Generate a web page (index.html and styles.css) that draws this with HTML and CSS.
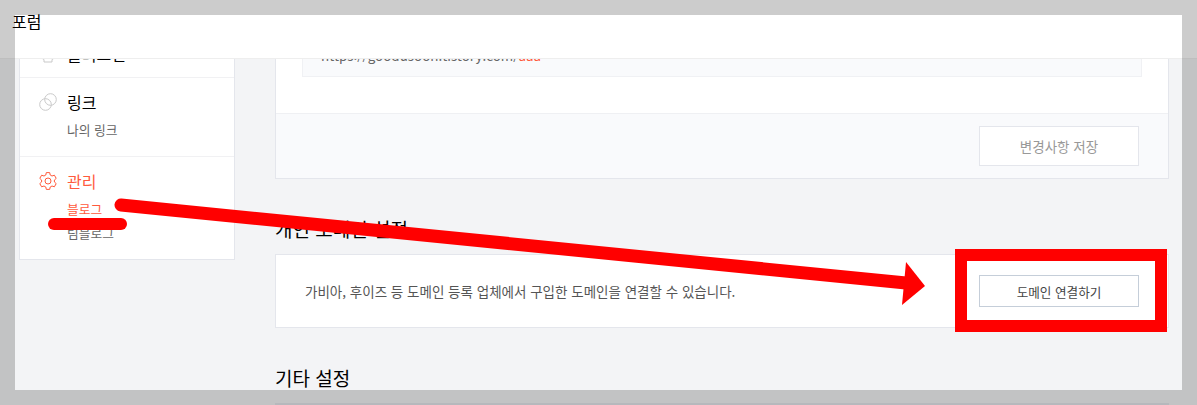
FILE: index.html
```html
<!DOCTYPE html>
<html lang="ko">
<head>
    <meta charset="UTF-8">
    <title>포럼</title>
    <link rel="stylesheet" href="styles.css">
</head>
<body>
    <div class="header"></div>

    <div class="layout">
        <div class="sidebar">
            <div class="nav-item nav-first">
                <svg class="nav-icon" viewBox="0 0 18 18"><path d="M2.5 13 L5 14.5 V17 H13 V14.5 L15.5 13" /></svg>
                <div class="nav-label">플러그인</div>
            </div>
            <div class="nav-item">
                <svg class="nav-icon" viewBox="0 0 18 18">
                    <ellipse cx="6.5" cy="11.5" rx="5.8" ry="5.8" />
                    <ellipse cx="11.5" cy="6.5" rx="5.8" ry="5.8" />
                </svg>
                <div class="nav-label">링크</div>
                <div class="nav-sub">
                    <a>나의 링크</a>
                </div>
            </div>
            <div class="nav-item nav-last active">
                <svg class="nav-icon" viewBox="0 0 18 18">
                    <path d="M7.3 0.6 H10.7 L11.2 3 L13 4 L15.4 3.2 L17.2 6.4 L15.4 8 V10 L17.2 11.6 L15.4 14.8 L13 14 L11.2 15 L10.7 17.4 H7.3 L6.8 15 L5 14 L2.6 14.8 L0.8 11.6 L2.6 10 V8 L0.8 6.4 L2.6 3.2 L5 4 L6.8 3 Z" />
                    <circle cx="9" cy="9" r="3" />
                </svg>
                <div class="nav-label">관리</div>
                <div class="nav-sub">
                    <a class="current">블로그</a>
                    <a>팀블로그</a>
                </div>
            </div>
        </div>

        <div class="main">
            <div class="card">
                <div class="card-body">
                    <div class="url-box">https://goodusoon.tistory.com/<span class="url-red">aaa</span></div>
                </div>
                <div class="card-footer">
                    <button class="btn btn-disabled">변경사항 저장</button>
                </div>
            </div>

            <h2 class="section-title">개인 도메인 설정</h2>
            <div class="card domain-row">
                <p>가비아, 후이즈 등 도메인 등록 업체에서 구입한 도메인을 연결할 수 있습니다.</p>
                <button class="btn btn-connect">도메인 연결하기</button>
            </div>

            <h2 class="section-title">기타 설정</h2>
            <div class="card"></div>
        </div>
    </div>

    <div class="dim-frame"></div>
    <div class="forum-title">포럼</div>

    <svg class="marks" viewBox="0 0 1197 405">
        <line x1="121" y1="205" x2="906" y2="283" stroke="#ff0000" stroke-width="13" stroke-linecap="round" />
        <polygon points="906,262 925,286 902,305" fill="#ff0000" />
        <line x1="54" y1="224" x2="121" y2="224" stroke="#ff0000" stroke-width="12" stroke-linecap="round" />
        <rect x="961" y="255" width="200" height="71" fill="none" stroke="#ff0000" stroke-width="12" />
    </svg>
</body>
</html>
```

FILE: styles.css
```css
* { box-sizing: border-box; }
html, body { margin: 0; padding: 0; height: 405px; overflow: hidden; }
body { position: relative; background: #f3f4f6; font-family: "Noto Sans CJK KR", "Noto Sans", sans-serif; color: #333; }

.header { position: absolute; top: 0; left: 0; right: 0; height: 59px; background: #fff; border-bottom: 1px solid #eeeeee; z-index: 2; }
.dim-frame { position: absolute; top: 0; left: 0; width: 1197px; height: 405px; border: 15px solid rgba(0, 0, 0, 0.2); z-index: 3; }
.forum-title { position: absolute; top: 11px; left: 12px; font-size: 16px; line-height: 20px; color: #000; z-index: 4; }
.marks { position: absolute; top: 0; left: 0; width: 1197px; height: 405px; z-index: 5; }

.layout { display: flex; align-items: flex-start; gap: 40px; padding-left: 19px; }

.sidebar { width: 216px; background: #fff; border: 1px solid #e4e6ec; border-top: none; }
.nav-item { position: relative; padding: 15px 0 14px 47px; border-bottom: 1px solid #f1f1f3; }
.nav-first { padding-top: 45px; padding-bottom: 14px; }
.nav-last { border-bottom: none; }
.nav-icon { position: absolute; left: 19px; width: 18px; height: 18px; fill: none; stroke: #c9c9c9; stroke-width: 1; }
.nav-label { font-size: 16px; line-height: 18px; color: #000; }
.nav-sub { margin-top: 7px; }
.nav-sub a { display: block; font-size: 12.75px; line-height: 24px; color: #666; }
.active .nav-icon { stroke: #ff5a3c; }
.active .nav-label, .nav-sub a.current { color: #ff5a3c; }

.main { width: 894px; }
.card { background: #fff; border: 1px solid #e4e6ec; }
.card-body { height: 113px; padding: 0 26px; border-bottom: 1px solid #eff0f3; }
.url-box { height: 76px; padding: 44px 18px 0; font-size: 13.4px; line-height: 20px; color: #666; background: #f9fafc; border: 1px solid #f0f1f4; border-top: none; }
.url-red { color: #ff5a3c; }
.card-footer { display: flex; justify-content: flex-end; padding: 12px 29px 12px 0; background: #f9fafc; }

.btn { width: 160px; background: #fff; font-family: inherit; padding: 0; border: 1px solid #e4e6ec; }
.btn-disabled { height: 40px; font-size: 13.5px; color: #999; }
.btn-connect { height: 32px; font-size: 12.6px; color: #444; border-color: #c5ced9; }

.section-title { margin: 37px 0 13px; font-size: 19px; line-height: 25px; font-weight: 400; color: #000; }

.domain-row { display: flex; align-items: center; justify-content: space-between; height: 74px; padding: 0 29px; }
.domain-row p { margin: 0; font-size: 13.5px; color: #555; }
```
